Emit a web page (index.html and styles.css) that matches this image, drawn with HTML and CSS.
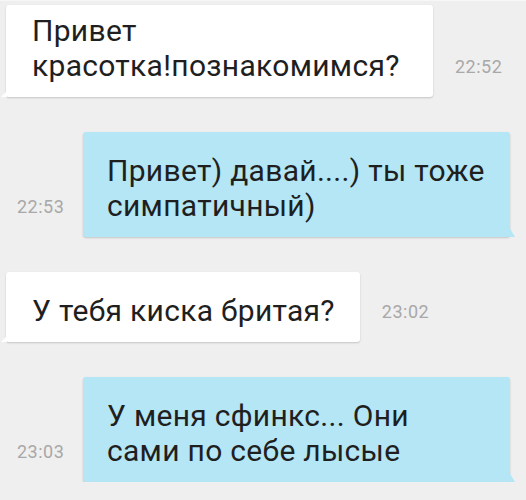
FILE: index.html
```html
<!DOCTYPE html>
<html lang="ru">

<head>
    <meta charset="UTF-8">
    <meta name="viewport" content="width=device-width, initial-scale=1.0">
    <title>Чат</title>
    <link rel="stylesheet" href="styles.css">
</head>

<body>
    <div class="chat">
        <div class="row in">
            <div class="bubble first">Привет<br>красотка!познакомимся?</div>
            <span class="time">22:52</span>
        </div>
        <div class="row out">
            <span class="time">22:53</span>
            <div class="bubble">Привет) давай....) ты тоже<br>симпатичный)</div>
        </div>
        <div class="row in">
            <div class="bubble">У тебя киска бритая?</div>
            <span class="time">23:02</span>
        </div>
        <div class="row out">
            <span class="time">23:03</span>
            <div class="bubble">У меня сфинкс... Они<br>сами по себе лысые</div>
        </div>
    </div>
</body>

</html>
```

FILE: styles.css
```css
* {
    margin: 0;
    padding: 0;
    box-sizing: border-box;
}

body {
    background-color: #efefef;
    font-family: Roboto, "Liberation Sans", sans-serif;
    color: #1f1f1f;
}

.chat {
    display: flex;
    flex-direction: column;
    gap: 35px;
    padding-top: 4px;
    border-top: 1px solid #f7f7f7;
}

.row {
    display: flex;
    align-items: flex-end;
}

.row.in {
    padding-left: 6px;
}

.row.out {
    padding-left: 17px;
}

.bubble {
    position: relative;
    padding: 21px 25px 14px 26px;
    font-size: 30px;
    line-height: 35px;
    letter-spacing: 0.3px;
    border-radius: 3px;
    box-shadow: 0 1px 2px rgba(0, 0, 0, .18);
}

.in .bubble {
    background-color: #fff;
}

.in .bubble.first {
    width: 427px;
    padding-top: 8px;
}

.out .bubble {
    width: 427px;
    padding-left: 24px;
    background-color: #b4e6f5;
}

/* хвостики пузырей */
.bubble::after {
    content: "";
    position: absolute;
    bottom: 0;
    width: 0;
    height: 0;
}

.in .bubble::after {
    left: -5px;
    border-bottom: 6px solid #fff;
    border-left: 6px solid transparent;
}

.out .bubble::after {
    right: -5px;
    border-bottom: 10px solid #b4e6f5;
    border-right: 6px solid transparent;
}

.time {
    font-size: 18px;
    line-height: 20px;
    letter-spacing: 0.5px;
    color: #a8a8a8;
    margin-bottom: 20px;
}

.in .time {
    margin-left: 22px;
}

.out .time {
    width: 66px;
}
```
